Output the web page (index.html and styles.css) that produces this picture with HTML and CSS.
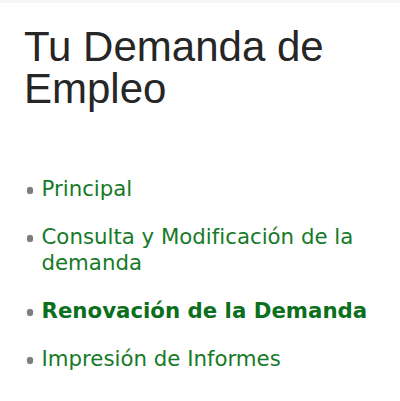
FILE: index.html
```html
<!DOCTYPE html>
<html lang="es">
<head>
<meta charset="utf-8">
<title>Tu Demanda de Empleo</title>
<link rel="stylesheet" href="styles.css">
</head>
<body>
<div class="page">
  <h1 class="title">Tu Demanda de Empleo</h1>
  <ul class="menu">
    <li class="menu-item"><a class="menu-link" href="#">Principal</a></li>
    <li class="menu-item"><a class="menu-link" href="#">Consulta y Modificación de la demanda</a></li>
    <li class="menu-item"><a class="menu-link active" href="#">Renovación de la Demanda</a></li>
    <li class="menu-item"><a class="menu-link" href="#">Impresión de Informes</a></li>
  </ul>
</div>
</body>
</html>
```
FILE: styles.css
```css
html, body {
  margin: 0;
  padding: 0;
  background: #ffffff;
}

.page {
  width: 400px;
  height: 401px;
  box-sizing: border-box;
  border-top: 3px solid #f6f6f6;
  padding: 23px 0 0 24px;
}

.title {
  margin: 0;
  width: 340px;
  font-family: "Liberation Sans", Arial, sans-serif;
  font-size: 42px;
  line-height: 42px;
  font-weight: normal;
  color: #262626;
}

.menu {
  list-style: none;
  margin: 66px 0 0 0;
  padding: 0 0 0 2.5px;
  width: 350px;
}

.menu-item {
  display: flex;
  align-items: flex-start;
  gap: 8.5px;
  margin-bottom: 22px;
  font-family: "DejaVu Sans", Verdana, sans-serif;
  font-size: 21.3px;
  line-height: 26px;
}

.menu-item::before {
  content: "";
  flex: none;
  width: 6.5px;
  height: 6.5px;
  margin-top: 11px;
  border-radius: 50%;
  background: #7d7d7d;
  box-shadow: 0 0 1px #9a9a9a;
}

.menu-link {
  color: #167a28;
  text-decoration: none;
}

.menu-link.active {
  font-weight: bold;
  color: #0b6f1d;
}
```
